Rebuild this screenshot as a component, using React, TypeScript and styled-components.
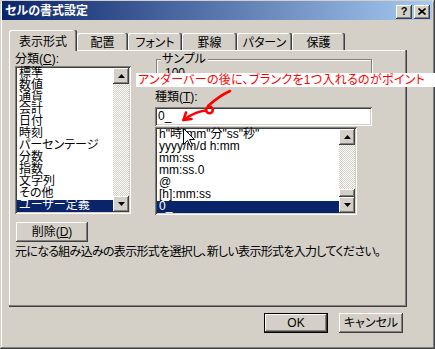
import React from "react";
import styled, { createGlobalStyle } from "styled-components";

const face = "#D4D0C8";
const shadow = "#808080";
const dark = "#404040";
const highlight = "#0A246A";

const raised = `box-shadow: inset -1px -1px ${dark}, inset 1px 1px #fff, inset -2px -2px ${shadow}, inset 2px 2px ${face};`;
const sunken = `box-shadow: inset 1px 1px ${shadow}, inset -1px -1px #fff, inset 2px 2px ${dark}, inset -2px -2px ${face};`;

const GlobalStyle = createGlobalStyle`
  html, body {
    margin: 0;
    padding: 0;
    background: ${face};
  }
  body {
    font-family: "Liberation Sans", "Noto Sans CJK JP", sans-serif;
    font-size: 12px;
    font-feature-settings: "palt";
  }
`;

const categories = [
  "標準", "数値", "通貨", "会計", "日付", "時刻",
  "パーセンテージ", "分数", "指数", "文字列", "その他", "ユーザー定義",
];

const formats = [
  'h"時"mm"分"ss"秒"',
  "yyyy/m/d h:mm",
  "mm:ss",
  "mm:ss.0",
  "@",
  "[h]:mm:ss",
  "0_",
];

const tabs = [
  { label: "表示形式", w: 68 },
  { label: "配置", w: 51 },
  { label: "フォント", w: 54 },
  { label: "罫線", w: 55 },
  { label: "パターン", w: 55 },
  { label: "保護", w: 53 },
];

const Arrow = ({ down }: { down?: boolean }) => (
  <svg width="7" height="4" viewBox="0 0 7 4">
    <polygon points={down ? "0,0 7,0 3.5,4" : "0,4 7,4 3.5,0"} fill="#000" />
  </svg>
);

const ScrollBar = ({ thumb }: { thumb?: boolean }) => (
  <Scroll>
    <ScrollArrow><Arrow /></ScrollArrow>
    <ScrollTrack>{thumb && <ScrollThumb />}</ScrollTrack>
    <ScrollArrow><Arrow down /></ScrollArrow>
  </Scroll>
);

const App = () => {
  return (
    <>
      <GlobalStyle />
      <Window>
        <TitleBar>
          <TitleText>セルの書式設定</TitleText>
          <CaptionButtons>
            <CaptionButton>?</CaptionButton>
            <CaptionButton>
              <svg width="8" height="7" viewBox="0 0 8 7">
                <path d="M0.5 0.5 L7.5 6.5 M7.5 0.5 L0.5 6.5" stroke="#000" strokeWidth="1.6" />
              </svg>
            </CaptionButton>
          </CaptionButtons>
        </TitleBar>

        <Body>
          <TabStrip>
            {tabs.map((t, i) => (
              <Tab key={t.label} $active={i === 0} $w={t.w}>{t.label}</Tab>
            ))}
          </TabStrip>

          <Panel>
            <Columns>
              <LeftCol>
                <FieldLabel>分類(<u>C</u>):</FieldLabel>
                <ListBox $w={116} $h={148}>
                  <Items>
                    {categories.map((c, i) => (
                      <Item key={c} $selected={i === categories.length - 1}>{c}</Item>
                    ))}
                  </Items>
                  <ScrollBar />
                </ListBox>
              </LeftCol>

              <RightCol>
                <GroupBox>
                  <Legend>サンプル</Legend>
                  <SampleValue>100</SampleValue>
                </GroupBox>
                <FieldLabel $top={6}>種類(<u>T</u>):</FieldLabel>
                <TextInput>0_</TextInput>
                <ListBox $w={202} $h={88} $top={1}>
                  <Items>
                    {formats.map((f, i) => (
                      <Item key={f} $selected={i === formats.length - 1}>{f}</Item>
                    ))}
                  </Items>
                  <ScrollBar thumb />
                </ListBox>
              </RightCol>
            </Columns>

            <PushButton $w={72} $top={7} $left={1}>削除(<u>D</u>)</PushButton>
            <Hint>元になる組み込みの表示形式を選択し、新しい表示形式を入力してください。</Hint>
          </Panel>

          <ButtonRow>
            <PushButton $w={64} $default>OK</PushButton>
            <PushButton $w={64}>キャンセル</PushButton>
          </ButtonRow>
        </Body>

        <Annotation>アンダーバーの後に、ブランクを1つ入れるのがポイント</Annotation>

        <RedArrow viewBox="175 85 60 40" width="60" height="40">
          <g fill="none" stroke="#FF0000" strokeWidth="2.6" strokeLinecap="round">
            <path d="M230 91 Q219 96 208 106" />
            <circle cx="209.5" cy="110" r="3.3" />
            <path d="M205.5 110.5 Q194 112 183.5 120" />
            <path d="M183.5 120 L186 112.5 M183.5 120 L191.5 119" />
          </g>
        </RedArrow>

        <Cursor viewBox="0 0 12 19" width="12" height="19">
          <polygon
            points="0.5,0.5 0.5,16.5 4.5,12.5 7.5,18.5 9.5,17.5 6.5,11.5 11.5,11.5"
            fill="#fff"
            stroke="#000"
            strokeWidth="1"
          />
        </Cursor>
      </Window>
    </>
  );
};

export default App;

const Window = styled.div`
  position: relative;
  box-sizing: border-box;
  width: 435px;
  height: 349px;
  padding: 1px 3px 0 2px;
  background: ${face};
  box-shadow: inset -1px -1px ${dark}, inset 1px 1px ${face}, inset -2px -2px ${shadow}, inset 2px 2px #fff;
  overflow: hidden;
`;

const TitleBar = styled.div`
  display: flex;
  align-items: center;
  justify-content: space-between;
  height: 19px;
  padding: 0 2px 0 3px;
  background: linear-gradient(to right, #0a246a, #a6caf0);
`;

const TitleText = styled.div`
  color: #fff;
  font-weight: bold;
  font-size: 12px;
  line-height: 12px;
`;

const CaptionButtons = styled.div`
  display: flex;
  gap: 2px;
  margin-top: 2px;
`;

const CaptionButton = styled.div`
  display: flex;
  align-items: center;
  justify-content: center;
  width: 16px;
  height: 14px;
  background: ${face};
  ${raised}
  font-family: "Liberation Sans", sans-serif;
  font-weight: bold;
  font-size: 11px;
  line-height: 11px;
  color: #000;
`;

const Body = styled.div`
  display: flex;
  flex-direction: column;
  padding-left: 7px;
`;

const TabStrip = styled.div`
  display: flex;
  align-items: flex-end;
  height: 20px;
  margin-top: 10px;
`;

const Tab = styled.div<{ $active?: boolean; $w: number }>`
  position: relative;
  z-index: ${(p) => (p.$active ? 1 : 0)};
  box-sizing: border-box;
  display: flex;
  justify-content: center;
  width: ${(p) => p.$w}px;
  height: ${(p) => (p.$active ? 21 : 17)}px;
  margin-bottom: ${(p) => (p.$active ? -1 : 0)}px;
  padding-top: ${(p) => (p.$active ? 6 : 4)}px;
  background: ${face};
  line-height: 12px;
  color: #000;
  border-top-left-radius: 2px;
  border-top-right-radius: 2px;
  box-shadow: inset -1px 0 ${dark}, inset -2px 0 ${shadow}, inset 1px 1px #fff;
`;

const Panel = styled.div`
  box-sizing: border-box;
  width: 398px;
  height: 257px;
  padding: 3px 0 0 6px;
  background: ${face};
  box-shadow: inset -1px -1px ${dark}, inset -2px -2px ${shadow}, inset 1px 1px #fff;
`;

const Columns = styled.div`
  display: flex;
  align-items: flex-start;
`;

const LeftCol = styled.div`
  display: flex;
  flex-direction: column;
  width: 116px;
`;

const RightCol = styled.div`
  display: flex;
  flex-direction: column;
  width: 217px;
  margin-left: 24px;
`;

const FieldLabel = styled.div<{ $top?: number }>`
  margin-top: ${(p) => p.$top ?? 0}px;
  line-height: 12px;
  height: 12px;
  color: #000;
  white-space: nowrap;
`;

const ListBox = styled.div<{ $w: number; $h: number; $top?: number }>`
  box-sizing: border-box;
  display: flex;
  width: ${(p) => p.$w}px;
  height: ${(p) => p.$h}px;
  margin-top: ${(p) => p.$top ?? 1}px;
  padding: 2px;
  background: #fff;
  ${sunken}
  overflow: hidden;
`;

const Items = styled.div`
  flex: 1;
  display: flex;
  flex-direction: column;
  min-width: 0;
`;

const Item = styled.div<{ $selected?: boolean }>`
  height: 12px;
  line-height: 10px;
  padding-left: 2px;
  white-space: nowrap;
  color: ${(p) => (p.$selected ? "#fff" : "#000")};
  background: ${(p) => (p.$selected ? highlight : "transparent")};
`;

const Scroll = styled.div`
  display: flex;
  flex-direction: column;
  width: 16px;
`;

const ScrollArrow = styled.div`
  display: flex;
  align-items: center;
  justify-content: center;
  height: 16px;
  background: ${face};
  ${raised}
`;

const ScrollTrack = styled.div`
  flex: 1;
  display: flex;
  flex-direction: column;
  justify-content: flex-end;
  background: repeating-conic-gradient(#fff 0 25%, ${face} 0 50%) 0 0 / 2px 2px;
`;

const ScrollThumb = styled.div`
  height: 8px;
  background: ${face};
  ${raised}
`;

const GroupBox = styled.div`
  box-sizing: border-box;
  display: flex;
  flex-direction: column;
  align-items: flex-start;
  width: 216px;
  height: 26px;
  margin: 6px 0 0 1px;
  border: 1px solid ${shadow};
  box-shadow: inset 1px 1px #fff, 1px 1px #fff;
`;

const Legend = styled.div`
  margin: -7px 0 0 4px;
  padding: 0 2px 0 1px;
  background: ${face};
  line-height: 12px;
  color: #000;
`;

const SampleValue = styled.div`
  margin-top: 2px;
  padding-left: 8px;
  line-height: 12px;
  color: #000;
`;

const TextInput = styled.div`
  box-sizing: border-box;
  width: 217px;
  height: 19px;
  margin-top: 4px;
  padding: 3px 0 0 3px;
  background: #fff;
  ${sunken}
  line-height: 12px;
  color: #000;
`;

const PushButton = styled.div<{ $w: number; $top?: number; $left?: number; $default?: boolean }>`
  box-sizing: border-box;
  display: flex;
  align-items: center;
  justify-content: center;
  width: ${(p) => p.$w}px;
  height: 20px;
  margin-top: ${(p) => p.$top ?? 0}px;
  margin-left: ${(p) => p.$left ?? 0}px;
  background: ${face};
  color: #000;
  line-height: 12px;
  ${(p) =>
    p.$default
      ? `box-shadow: inset 0 0 0 1px #000, inset -2px -2px ${dark}, inset 2px 2px #fff, inset -3px -3px ${shadow};`
      : raised}
`;

const Hint = styled.div`
  margin-top: 4px;
  line-height: 12px;
  letter-spacing: -0.7px;
  color: #000;
  white-space: nowrap;
`;

const ButtonRow = styled.div`
  display: flex;
  justify-content: flex-end;
  gap: 11px;
  width: 398px;
  box-sizing: border-box;
  padding-right: 4px;
  margin-top: 6px;
`;

const Annotation = styled.div`
  position: absolute;
  left: 136px;
  top: 73px;
  width: 299px;
  height: 14px;
  box-sizing: border-box;
  padding-left: 2px;
  background: #fff;
  color: #ff0000;
  line-height: 14px;
  letter-spacing: 0.3px;
  white-space: nowrap;
`;

const RedArrow = styled.svg`
  position: absolute;
  left: 175px;
  top: 85px;
`;

const Cursor = styled.svg`
  position: absolute;
  left: 183px;
  top: 128px;
`;
